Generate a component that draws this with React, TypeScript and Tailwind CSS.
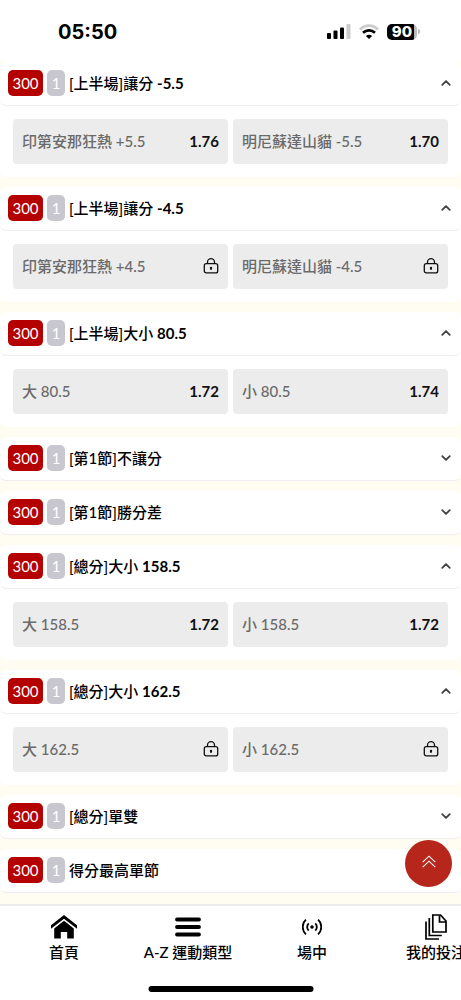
import { ChevronDown, ChevronUp } from "lucide-react";

type Odd = { name: string; price?: string };
type Market = { title: string; line?: string; odds?: Odd[] };

const markets: Market[] = [
    { title: "[上半場]讓分", line: "-5.5", odds: [{ name: "印第安那狂熱 +5.5", price: "1.76" }, { name: "明尼蘇達山貓 -5.5", price: "1.70" }] },
    { title: "[上半場]讓分", line: "-4.5", odds: [{ name: "印第安那狂熱 +4.5" }, { name: "明尼蘇達山貓 -4.5" }] },
    { title: "[上半場]大小", line: "80.5", odds: [{ name: "大 80.5", price: "1.72" }, { name: "小 80.5", price: "1.74" }] },
    { title: "[第1節]不讓分" },
    { title: "[第1節]勝分差" },
    { title: "[總分]大小", line: "158.5", odds: [{ name: "大 158.5", price: "1.72" }, { name: "小 158.5", price: "1.72" }] },
    { title: "[總分]大小", line: "162.5", odds: [{ name: "大 162.5" }, { name: "小 162.5" }] },
    { title: "[總分]單雙" },
    { title: "得分最高單節" },
];

const LockIcon = () => (
    <svg width="16" height="16" viewBox="0 0 16 16" fill="none" stroke="#111" strokeWidth="1.3" role="img" aria-label="鎖定">
        <rect x="1.3" y="5.7" width="13.4" height="9.2" rx="2" />
        <path d="M4.5 5.5V4.2a3.5 3.5 0 0 1 7 0v1.3" />
        <circle cx="8" cy="10" r="1.2" fill="#111" stroke="none" />
        <path d="M8 10v2" />
    </svg>
);

const StatusBar = () => (
    <header className="flex h-[62px] items-center justify-between bg-white pt-px pr-[41px] pl-[58px] text-black">
        <time className="font-['Inter',sans-serif] text-[20px] font-bold">05:50</time>
        <div className="flex items-center gap-2">
            <svg width="24" height="16" viewBox="0 0 24 16">
                <rect x="0" y="9" width="4" height="6" rx="1" />
                <rect x="6.5" y="6.5" width="4" height="8.5" rx="1" />
                <rect x="13" y="3.5" width="4" height="11.5" rx="1" />
                <rect x="19.5" y="0" width="4" height="15" rx="1" fill="#ccc" />
            </svg>
            <svg width="20" height="16" viewBox="0 0 20 16" fill="none">
                <path d="M1 5.4C6 .3 14 .3 19 5.4" stroke="#ccc" strokeWidth="2.8" />
                <path d="M4 8.8C7.5 5.6 12.5 5.6 16 8.8" stroke="#000" strokeWidth="2.8" />
                <path d="M10 15 6.9 12c1.7-1.7 4.5-1.7 6.2 0Z" fill="#000" />
            </svg>
            <div className="flex items-center gap-px">
                <div className="flex h-4 w-[30px] items-center justify-center rounded-[5px] bg-linear-to-r from-black from-90% to-[#bbb] to-90% font-['Inter',sans-serif] text-[15px] leading-4 font-extrabold text-white">
                    90
                </div>
                <div className="h-[5px] w-[2px] rounded-r-full bg-[#bbb]" />
            </div>
        </div>
    </header>
);

const OddButton = ({ odd }: { odd: Odd }) => (
    <button type="button" className="flex h-[45px] items-center justify-between rounded bg-[#ececec] px-[9px] pb-[2px]">
        <span className="font-medium text-[#6a6a6a]">{odd.name}</span>
        {odd.price ? <span className="font-bold text-[#111]">{odd.price}</span> : <LockIcon />}
    </button>
);

const MarketCard = ({ market }: { market: Market }) => (
    <section className="rounded-md bg-white">
        <button
            type="button"
            aria-expanded={!!market.odds}
            className="flex h-11 w-full items-center gap-1 rounded-md border-b border-[#ededf2] pr-[9px] pb-px pl-2"
        >
            <span className="h-[26px] w-[35px] rounded-[5px] bg-[#b50000] text-center leading-[26px] text-white">300</span>
            <span className="h-[26px] w-[18px] rounded-[5px] bg-[#c8c7cf] text-center leading-[26px] text-white">1</span>
            <span className="pb-px font-medium text-black">
                {market.title} {market.line && <span className="font-bold">{market.line}</span>}
            </span>
            {market.odds ? (
                <ChevronUp className="ml-auto size-3 scale-125 text-[#444]" strokeWidth={3} />
            ) : (
                <ChevronDown className="ml-auto size-3 scale-125 text-[#444]" strokeWidth={3} />
            )}
        </button>
        {market.odds && (
            <div className="grid grid-cols-2 gap-[5px] p-[13px]">
                {market.odds.map((odd) => (
                    <OddButton key={odd.name} odd={odd} />
                ))}
            </div>
        )}
    </section>
);

const HomeIcon = () => (
    <svg width="26" height="24" viewBox="0 0 26 24">
        <path d="M13 0 0 10.2v3.6L13 3.7l13 10.1v-3.6Z" />
        <path d="M13 5.8 3.2 13.5v10h6.6V17h6.4v6.5h6.6v-10Z" />
    </svg>
);

const MenuIcon = () => (
    <svg width="26" height="24" viewBox="0 0 26 24" stroke="#000" strokeWidth="3.8" strokeLinecap="round">
        <path d="M2 4.5h22M2 12h22M2 19.5h22" />
    </svg>
);

const LiveIcon = () => (
    <svg width="20" height="24" viewBox="0 0 20 24" fill="none" stroke="#000" strokeWidth="1.8">
        <circle cx="10" cy="12" r="1.8" fill="#000" stroke="none" />
        <path d="M6.7 8.3a5.2 5.2 0 0 0 0 7.4M13.3 8.3a5.2 5.2 0 0 1 0 7.4" />
        <path d="M3.9 4.7a10 10 0 0 0 0 14.6M16.1 4.7a10 10 0 0 1 0 14.6" />
    </svg>
);

const BetsIcon = () => (
    <svg width="22" height="26" viewBox="0 0 22 26" fill="none" stroke="#000" strokeWidth="1.7">
        <path d="M7.8 1h7.7L21 7v11H7.8Z" />
        <path d="M14.5 1.5V8H21" />
        <path d="M4.3 4v17.5h12.5M1 7.5V25h13" />
    </svg>
);

const navItems = [
    { label: "首頁", icon: <HomeIcon /> },
    { label: "A-Z 運動類型", icon: <MenuIcon /> },
    { label: "場中", icon: <LiveIcon /> },
    { label: "我的投注", icon: <BetsIcon /> },
];

const BottomNav = () => (
    <nav className="sticky bottom-0 h-24 border-t-2 border-[#ededf0] bg-white">
        <div className="flex overflow-hidden pl-[2px]">
            {navItems.map((item) => (
                <a key={item.label} href="#" className="flex w-[124px] shrink-0 flex-col items-center pt-[7px] font-medium whitespace-nowrap text-black">
                    <span className="flex h-[27px] items-center">{item.icon}</span>
                    <span className="mt-[2px]">{item.label}</span>
                </a>
            ))}
        </div>
        {/* Home indicator */}
        <div className="absolute bottom-2 left-1/2 h-[6px] w-[165px] -translate-x-1/2 rounded-full bg-black" />
    </nav>
);

export default function App() {
    return (
        <div className="flex min-h-screen flex-col bg-[#fffcf2] font-['Lato','Noto_Sans_CJK_TC',sans-serif] text-[15px] leading-5">
            <StatusBar />
            <main className="flex flex-1 flex-col gap-[10px]">
                {markets.map((market) => (
                    <MarketCard key={`${market.title}${market.line}`} market={market} />
                ))}
            </main>
            <button
                type="button"
                aria-label="回到頂部"
                className="fixed right-[9px] bottom-[113px] z-10 flex size-[47px] items-center justify-center rounded-full bg-[#b6261b]"
            >
                <svg width="14" height="14" viewBox="0 0 14 14" fill="none" stroke="#fff" strokeWidth="1.1" className="mb-1">
                    <path d="M.7 7.2 7 1.2l6.3 6M.7 12.2l6.300-6 6.300 6" />
                </svg>
            </button>
            <BottomNav />
        </div>
    );
}
